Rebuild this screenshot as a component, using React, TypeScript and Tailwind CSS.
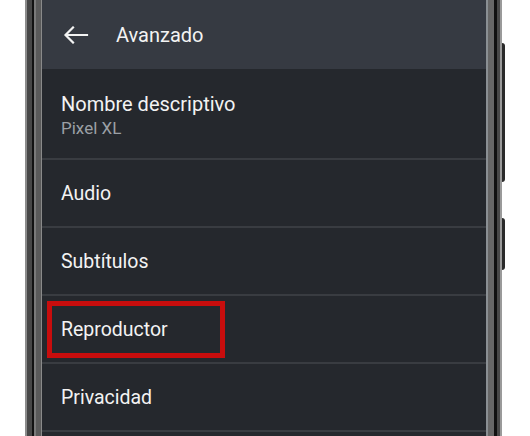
import React from 'react';

const ROWS = [
  { title: 'Audio' },
  { title: 'Subtítulos' },
  { title: 'Reproductor', marked: true },
  { title: 'Privacidad' },
];

function BackArrow() {
  return (
    <svg width="26" height="18" viewBox="0 0 26 18" fill="none" className="shrink-0">
      <path
        d="M24 9H3M10 1.5L2.5 9L10 16.5"
        stroke="#f3f3f3"
        strokeWidth="2.2"
        strokeLinecap="square"
      />
    </svg>
  );
}

export default function App() {
  return (
    <div
      className="flex h-[436px] w-[530px] overflow-hidden bg-white"
      style={{ fontFamily: 'Roboto, "Noto Sans", sans-serif' }}
    >
      {/* left side of phone frame */}
      <div className="w-[25px] shrink-0 bg-white" />
      <div className="flex shrink-0">
        <div className="w-[2px] bg-[#8c8c8c]" />
        <div className="w-[5px] bg-[#474747]" />
        <div className="w-[2px] bg-[#121212]" />
        <div className="w-[2px] bg-[#7a7a7a]" />
        <div className="w-[5px] bg-[#5a5a5a]" />
        <div className="w-[1px] bg-[#8a8a8a]" />
      </div>

      {/* screen */}
      <div className="flex w-[444px] shrink-0 flex-col bg-[#25282d]">
        <header className="flex h-[69px] shrink-0 items-center gap-[27px] bg-[#363a42] pl-[21px]">
          <BackArrow />
          <span className="text-[20px] leading-6 text-[#f3f3f3]">Avanzado</span>
        </header>

        <div className="flex h-[91px] shrink-0 flex-col justify-center gap-[2px] border-b-2 border-[#393c41] pl-[19px] pt-[2px]">
          <span className="text-[20px] leading-6 text-[#f3f3f3]">Nombre descriptivo</span>
          <span className="text-[17px] leading-5 text-[#9ba0a6]">Pixel XL</span>
        </div>

        {ROWS.map((row) => (
          <div
            key={row.title}
            className="relative flex h-[68px] shrink-0 items-center border-b-2 border-[#393c41] pl-[19px] pt-[2px]"
          >
            <span className="text-[19.5px] leading-6 text-[#f3f3f3]">{row.title}</span>
            {row.marked && (
              <div className="absolute left-[5px] top-[5px] h-[57px] w-[178px] border-[5px] border-[#c80d0d]" />
            )}
          </div>
        ))}
      </div>

      {/* right side of phone frame */}
      <div className="flex shrink-0">
        <div className="w-[2px] bg-[#8a8f93]" />
        <div className="w-[6px] bg-[#676767]" />
        <div className="w-[3px] bg-[#101010]" />
        <div className="w-[3px] bg-[#484848]" />
        <div className="w-[2px] bg-[#9a9a9a]" />
      </div>
      <div className="flex w-[3px] shrink-0 flex-col">
        <div className="h-[43px]" />
        <div className="h-[139px] rounded-r-sm bg-[#2a2a2a]" />
        <div className="h-[36px]" />
        <div className="h-[52px] rounded-r-sm bg-[#2a2a2a]" />
      </div>
    </div>
  );
}
